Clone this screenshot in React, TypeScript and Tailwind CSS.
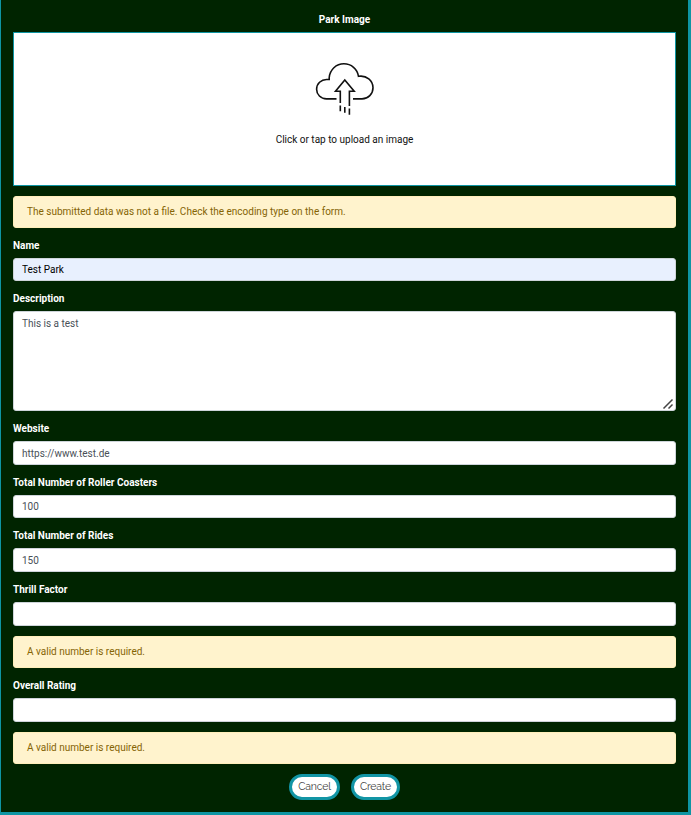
import React from "react";

function Label({ children }: { children: React.ReactNode }) {
  return (
    <label className="block h-[30px] pt-[11px] text-[10px] leading-[14px] font-bold text-white">
      {children}
    </label>
  );
}

function Field({ value, height = "h-6", tone = "bg-white text-[#495057]" }: { value: string; height?: string; tone?: string }) {
  return (
    <input
      readOnly
      value={value}
      className={`block w-full rounded-[3px] border border-[#ced4da] px-2 text-[10px] leading-[14px] outline-none ${height} ${tone}`}
    />
  );
}

function Alert({ children }: { children: React.ReactNode }) {
  return (
    <div className="mt-[10px] flex h-8 items-center rounded-[3px] border border-[#ffeeba] bg-[#fff3cd] px-[13px] text-[10px] leading-[14px] text-[#856404]">
      {children}
    </div>
  );
}

function UploadIcon() {
  return (
    <svg width="60" height="54" viewBox="0 0 60 54" fill="none" stroke="#111" strokeWidth="1.6" className="mt-[29px]">
      <path d="M21.5 36.9H11.5C5.8 36.9 1.6 32.5 1.6 27.2C1.6 21.6 6.2 17.5 11.5 17.5H14.2V15.7C14.8 7.8 21.2 1.8 28.9 1.8C36.2 1.8 42.4 7 43.5 14.3C51.6 13 58 18.5 58 25.7C58 32 53.2 36.9 47 36.9H38" />
      <path d="M25.3 41V29.2H20.5L29.8 18L39.2 29.2H34.4V44" />
      <path d="M25.3 43.5V49.3M29.8 45V50.8M34.4 46.5V52.7" />
    </svg>
  );
}

const button =
  "flex h-[26px] items-center justify-center rounded-full border-[3px] border-[#1295a5] bg-white pb-px font-['Raleway','Lato',sans-serif] text-[10.5px] leading-[15px] tracking-[-0.2px] text-[#444]";

export default function App() {
  return (
    <main className="h-[815px] w-[691px] border-r-[3px] border-b-[3px] border-l border-[#0e95a3] bg-[#002400] pr-3 pl-3 font-['Roboto',sans-serif]">
      <div className="h-8 pt-[13px] text-center text-[10px] leading-[14px] font-bold text-white">Park Image</div>
      <div className="flex h-[154px] flex-col items-center border border-[#0e95a3] bg-white">
        <UploadIcon />
        <p className="mt-[17px] text-[10px] leading-[14px] text-[#111]">Click or tap to upload an image</p>
      </div>
      <Alert>The submitted data was not a file. Check the encoding type on the form.</Alert>
      <Label>Name</Label>
      <Field value="Test Park" height="h-[23px]" tone="bg-[#e8f0fe] text-black" />
      <Label>Description</Label>
      <div className="relative h-[100px]">
        <textarea
          readOnly
          value="This is a test"
          className="block h-full w-full resize-none rounded-[3px] border border-[#ced4da] bg-white px-2 py-[5px] text-[10px] leading-[14px] text-[#495057] outline-none"
        />
        <svg width="12" height="12" viewBox="0 0 12 12" className="absolute right-[2px] bottom-[1px]" stroke="#444" strokeWidth="1.5">
          <path d="M1.5 10.5L10.5 1.5M6.5 10.5L10.5 6.5" />
        </svg>
      </div>
      <Label>Website</Label>
      <Field value="https://www.test.de" />
      <Label>Total Number of Roller Coasters</Label>
      <Field value="100" height="h-[23px]" />
      <Label>Total Number of Rides</Label>
      <Field value="150" />
      <Label>Thrill Factor</Label>
      <Field value="" />
      <Alert>A valid number is required.</Alert>
      <Label>Overall Rating</Label>
      <Field value="" />
      <Alert>A valid number is required.</Alert>
      <div className="mt-[10px] flex justify-center gap-[11px]">
        <button className={`${button} w-[51px]`}>Cancel</button>
        <button className={`${button} w-[49px]`}>Create</button>
      </div>
    </main>
  );
}
